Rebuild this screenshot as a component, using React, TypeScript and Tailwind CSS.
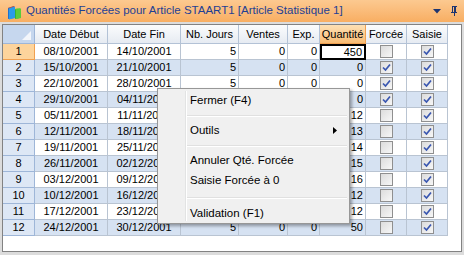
import React from "react";

const cols = [32, 73, 73, 58, 49, 32, 46, 41, 41];
const headers = ["Date Début", "Date Fin", "Nb. Jours", "Ventes", "Exp.", "Quantité", "Forcée", "Saisie"];

const rows = [
  { d: "08/10/2001", f: "14/10/2001", q: 450, forced: false },
  { d: "15/10/2001", f: "21/10/2001", q: 0, forced: true },
  { d: "22/10/2001", f: "28/10/2001", q: 0, forced: true },
  { d: "29/10/2001", f: "04/11/2001", q: 0, forced: true },
  { d: "05/11/2001", f: "11/11/2001", q: 12, forced: false },
  { d: "12/11/2001", f: "18/11/2001", q: 13, forced: false },
  { d: "19/11/2001", f: "25/11/2001", q: 14, forced: false },
  { d: "26/11/2001", f: "02/12/2001", q: 15, forced: false },
  { d: "03/12/2001", f: "09/12/2001", q: 16, forced: false },
  { d: "10/12/2001", f: "16/12/2001", q: 12, forced: false },
  { d: "17/12/2001", f: "23/12/2001", q: 12, forced: false },
  { d: "24/12/2001", f: "30/12/2001", q: 50, forced: false },
];

function Check({ on }: { on: boolean }) {
  return (
    <div className="w-[13px] h-[13px] border border-[#8f8f8f] bg-gradient-to-br from-[#dcdcdc] to-[#f7f7f7] flex items-center justify-center">
      {on && (
        <svg width="9" height="9" viewBox="0 0 9 9">
          <path d="M1 4.5 L3.5 7 L8 1.5" fill="none" stroke="#3a57b0" strokeWidth="1.7" />
        </svg>
      )}
    </div>
  );
}

function BookIcon() {
  return (
    <svg width="17" height="17" viewBox="0 0 17 17">
      <path d="M3 5 L9 3 L9 15 L3 16 Z" fill="#1f6fd0" />
      <path d="M3 5 L9 3 L10 3.5 L4 5.5 Z" fill="#e04a2a" />
      <path d="M4 5.5 L10 3.5 L10 15 L4 16.5 Z" fill="#2a9be8" />
      <path d="M10 6 L15 5 L15 15 L10 16 Z" fill="#38b232" />
      <path d="M10 6 L15 5 L16 5.5 L11 6.5 Z" fill="#9bd95a" />
      <path d="M11 6.5 L16 5.5 L16 15 L11 16 Z" fill="#5acb3c" />
    </svg>
  );
}

function Sep({ h = "h-[9px]" }: { h?: string }) {
  return (
    <div className={`${h} flex flex-col justify-center pl-[29px] pr-[2px]`}>
      <div className="h-px bg-[#e0e0e0]" />
      <div className="h-px bg-white" />
    </div>
  );
}

export default function App() {
  return (
    <div className="relative w-[464px] h-[255px] bg-[#dcdcdc] flex flex-col overflow-hidden" style={{ fontFamily: '"Liberation Sans", Arial, sans-serif' }}>
      {/* Title bar */}
      <div className="h-[22px] flex items-center bg-gradient-to-b from-[#fcc990] to-[#f8ae62] pl-[5px] pr-[6px]">
        <BookIcon />
        <span className="ml-[4px] text-[11.5px] text-[#1e3f94] whitespace-nowrap">
          Quantités Forcées pour Article STAART1 [Article Statistique 1]
        </span>
        <div className="ml-auto flex items-center gap-[9px]">
          <svg width="8" height="5" viewBox="0 0 8 5">
            <path d="M0 0 H8 L4 4.5 Z" fill="#1e3570" />
          </svg>
          <svg width="8" height="10" viewBox="0 0 8 10">
            <path d="M2 0 H7 V1 H6 V6 H7 V7 H1 V6 H2 V1 H2 Z M3 1 V6 H4 V1 Z M4 7 H5 V10 H4 Z" fill="#1e3570" />
          </svg>
        </div>
      </div>

      {/* Body */}
      <div className="flex-1 px-[2px] pt-[2px] pb-[3px]">
        <div className="h-full border border-[#828282] bg-white">
          <div className="grid text-[11px] text-black" style={{ gridTemplateColumns: cols.map((c) => `${c}px`).join(" ") }}>
            {/* corner */}
            <div className="h-[19px] bg-[#c6d7ee] border-r border-b border-[#9eb6d8] relative">
              <svg className="absolute right-[3px] bottom-[3px]" width="9" height="9" viewBox="0 0 9 9">
                <path d="M9 0 V9 H0 Z" fill="#f3f6fb" />
              </svg>
            </div>
            {headers.map((h) => (
              <div
                key={h}
                className={
                  h === "Quantité"
                    ? "h-[19px] flex items-center justify-center border-r border-b border-[#f0a050] bg-gradient-to-b from-[#fde0b4] to-[#f8bc74]"
                    : "h-[19px] flex items-center justify-center border-r border-b border-[#b3c2d6] bg-gradient-to-b from-[#fbfcfd] to-[#e6ebf2]"
                }
              >
                {h}
              </div>
            ))}

            {rows.map((r, i) => {
              const alt = i % 2 === 1 ? "bg-[#d6e2f2]" : "bg-white";
              const cell = `h-[16px] border-r border-b border-[#b9c4d2] ${alt} flex items-center`;
              return (
                <React.Fragment key={i}>
                  <div
                    className={
                      i === 0
                        ? "h-[16px] border-r border-b border-[#f0a050] bg-[#fdd49c] flex items-center justify-center"
                        : "h-[16px] border-r border-b border-[#9eb6d8] bg-[#dde7f5] flex items-center justify-center"
                    }
                  >
                    {i + 1}
                  </div>
                  <div className={`${cell} justify-center`}>{r.d}</div>
                  <div className={`${cell} justify-center`}>{r.f}</div>
                  <div className={`${cell} justify-end pr-[2px]`}>5</div>
                  <div className={`${cell} justify-end pr-[2px]`}>0</div>
                  <div className={`${cell} justify-end pr-[2px]`}>0</div>
                  {i === 0 ? (
                    <div className="h-[16px] border-2 border-black bg-white flex items-center justify-end pr-[2px]">450</div>
                  ) : (
                    <div className={`${cell} justify-end pr-[2px]`}>{r.q}</div>
                  )}
                  <div className={`${cell} justify-center`}>
                    <Check on={r.forced} />
                  </div>
                  <div className={`${cell} justify-center`}>
                    <Check on={true} />
                  </div>
                </React.Fragment>
              );
            })}
          </div>
        </div>
      </div>

      {/* Context menu */}
      <div className="absolute left-[157px] top-[88px] w-[193px] bg-[#f0f0f0] border border-[#979797] shadow-[2px_2px_3px_rgba(0,0,0,0.35)] pt-[1px] text-[11.5px] text-black">
        <div className="absolute left-[27px] top-[2px] bottom-[2px] w-[2px] border-l border-[#e2e3e3] bg-white" />
        <div className="relative flex flex-col">
          <div className="h-[21px] flex items-center pl-[32px]">Fermer (F4)</div>
          <Sep />
          <div className="h-[21px] flex items-center pl-[32px] pr-[12px]">
            Outils
            <svg className="ml-auto" width="4" height="7" viewBox="0 0 4 7">
              <path d="M0 0 L4 3.5 L0 7 Z" fill="#000" />
            </svg>
          </div>
          <Sep />
          <div className="h-[21px] flex items-center pl-[32px]">Annuler Qté. Forcée</div>
          <div className="h-[20px] flex items-center pl-[32px]">Saisie Forcée à 0</div>
          <Sep h="h-[14px]" />
          <div className="h-[18px] flex items-center pl-[32px]">Validation (F1)</div>
        </div>
      </div>
    </div>
  );
}
